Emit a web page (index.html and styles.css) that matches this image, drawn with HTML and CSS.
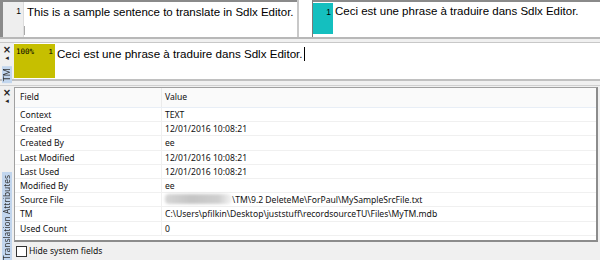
FILE: index.html
```html
<!DOCTYPE html>
<html>
<head>
<meta charset="utf-8">
<link rel="stylesheet" href="styles.css">
</head>
<body>
<div class="seg-row">
  <div class="seg seg-src">
    <div class="seg-num"><span class="num">1</span><span class="caret"></span></div>
    <div class="seg-text">This is a sample sentence to translate in Sdlx Editor.</div>
  </div>
  <div class="seg seg-tgt">
    <div class="tgt-gap"></div>
    <div class="tgt-box">
      <div class="tgt-num"><span class="num">1</span></div>
      <div class="seg-text">Ceci est une phrase à traduire dans Sdlx Editor.</div>
    </div>
  </div>
</div>

<div class="panel tm-panel">
  <div class="strip">
    <span class="x">×</span>
    <span class="pin">◂</span>
    <span class="vlabel tm-label">TM</span>
  </div>
  <div class="tm-body">
    <div class="tm-match"><span class="pct">100%</span><span class="num">1</span></div>
    <div class="seg-text">Ceci est une phrase à traduire dans Sdlx Editor.<span class="cursor"></span></div>
  </div>
</div>

<div class="panel attr-panel">
  <div class="strip">
    <span class="x">×</span>
    <span class="pin">◂</span>
    <span class="vlabel attr-label">Translation Attributes</span>
  </div>
  <div class="attr-main">
    <div class="grid">
      <div class="row head"><div class="c1">Field</div><div class="c2">Value</div></div>
      <div class="row"><div class="c1">Context</div><div class="c2">TEXT</div></div>
      <div class="row"><div class="c1">Created</div><div class="c2">12/01/2016 10:08:21</div></div>
      <div class="row"><div class="c1">Created By</div><div class="c2">ee</div></div>
      <div class="row"><div class="c1">Last Modified</div><div class="c2">12/01/2016 10:08:21</div></div>
      <div class="row"><div class="c1">Last Used</div><div class="c2">12/01/2016 10:08:21</div></div>
      <div class="row"><div class="c1">Modified By</div><div class="c2">ee</div></div>
      <div class="row"><div class="c1">Source File</div><div class="c2"><span class="blur"></span>\TM\9.2 DeleteMe\ForPaul\MySampleSrcFile.txt</div></div>
      <div class="row"><div class="c1">TM</div><div class="c2">C:\Users\pfilkin\Desktop\juststuff\recordsourceTU\Files\MyTM.mdb</div></div>
      <div class="row"><div class="c1">Used Count</div><div class="c2">0</div></div>
    </div>
    <label class="hide"><span class="box"></span>Hide system fields</label>
  </div>
</div>
</body>
</html>
```
FILE: styles.css
```css
html, body { margin: 0; padding: 0; }
body {
  width: 600px; height: 260px; overflow: hidden;
  background: #f0f0f0;
  font-family: "Liberation Sans", Arial, sans-serif;
}
.seg-row {
  display: flex; height: 37px;
  border-bottom: 2px solid #b8b8b8;
}
.seg { display: flex; background: #fff; }
.seg-src {
  width: 297px; flex-shrink: 0;
  border-left: 3px solid #8a8a8a;
  border-top: 2px solid #8a8a8a;
  box-sizing: border-box;
  overflow: hidden;
}
.seg-num {
  width: 20px; flex-shrink: 0; background: #eeeeee; position: relative;
  border-right: 1px solid #dcdcdc;
}
.num { font-size: 8.5px; position: absolute; right: 2px; top: 4px; }
.seg-num .caret { position: absolute; right: -2px; bottom: 2px; width: 1px; height: 9px; background: #aaa; }
.seg-text { font-size: 11.5px; color: #000; padding: 4px 0 0 3px; white-space: nowrap; }
.seg-tgt {
  flex: 1; border-left: 2px solid #c8c8c8; min-width: 0;
}
.tgt-gap { width: 13px; flex-shrink: 0; }
.tgt-box {
  flex: 1; display: flex;
  border-top: 2px solid #8a8a8a;
  border-left: 1px solid #7a7a7a;
  padding-bottom: 3px;
}
.tgt-num {
  width: 20px; flex-shrink: 0; background: #14bfbf; position: relative;
  margin-top: 1px;
}
.tgt-box .seg-text { padding-top: 3px; padding-left: 2px; }

.panel { display: flex; }
.strip {
  width: 14px; flex-shrink: 0; display: flex; flex-direction: column; align-items: center;
  font-family: "DejaVu Sans", sans-serif; color: #222;
}
.strip .x { font-size: 10px; line-height: 9px; margin-top: 2px; font-weight: bold; }
.strip .pin { font-size: 7px; line-height: 9px; }
.vlabel {
  writing-mode: vertical-rl; transform: rotate(180deg);
  background: #c2d6ee; color: #333;
  font-family: "Noto Sans", sans-serif; font-size: 8.4px; width: 10px;
  line-height: 10px; text-align: center;
}
.tm-panel {
  margin-top: 3px; height: 36px;
  border-top: 1px solid #c8c8c8;
  border-bottom: 2px solid #c0c0c0;
}
.tm-label { margin-top: 3px; padding: 2px 0; font-size: 9px; }
.tm-body { flex: 1; display: flex; background: #fff; }
.tm-match {
  width: 41px; flex-shrink: 0; background: #c6bf00; position: relative;
  margin: 1px 0 1px 0;
}
.tm-match .pct { position: absolute; left: 2px; top: 3px; font-size: 7.5px; font-family: "DejaVu Sans Mono", monospace; }
.tm-match .num { top: 3px; right: 2px; font-size: 8px; }
.tm-body .seg-text { padding-top: 4px; padding-left: 2px; font-size: 11.6px; }
.cursor { display: inline-block; width: 1px; height: 14px; background: #000; vertical-align: -3px; margin-left: 1px; }

.attr-panel {
  margin-top: 4px; height: 178px;
  border-top: 1px solid #d0d0d0;
}
.attr-label { margin-top: auto; padding: 3px 0; margin-bottom: 1px; }
.attr-main { flex: 1; display: flex; flex-direction: column; }
.grid {
  margin-top: 1px; height: 155px; width: 584px; box-sizing: border-box;
  background: #fff;
  border: 1px solid #a0a0a0; border-right: 2px solid #8c8c8c; border-bottom: 2px solid #8c8c8c;
  font-family: "Noto Sans", sans-serif; font-size: 8.6px; color: #111;
}
.row { display: flex; height: 14.2px; line-height: 14px; border-bottom: 1px solid #f0f0f0; box-sizing: border-box; }
.row.head { height: 20px; line-height: 18px; background: #fafafa; border-bottom: 1px solid #e8eef6; }
.c1 { width: 147px; box-sizing: border-box; padding-left: 5px; border-right: 1px solid #f0f0f0; flex-shrink: 0; }
.head .c1 { border-right: 1px solid #ebebeb; }
.c2 { padding-left: 3px; white-space: nowrap; }
.blur {
  display: inline-block; width: 67px; height: 10px; vertical-align: -1px;
  background: linear-gradient(90deg, #d6d6d6, #c4c4c4 40%, #cfcfcf 80%, #f4f4f4);
  border-radius: 4px; filter: blur(1.5px);
}
.hide {
  display: flex; align-items: center; margin-top: 3px;
  font-family: "Noto Sans", sans-serif; font-size: 8.6px; color: #111;
}
.box { width: 9px; height: 9px; border: 1px solid #333; background: #fff; margin: 0 2px 0 2px; }
```
